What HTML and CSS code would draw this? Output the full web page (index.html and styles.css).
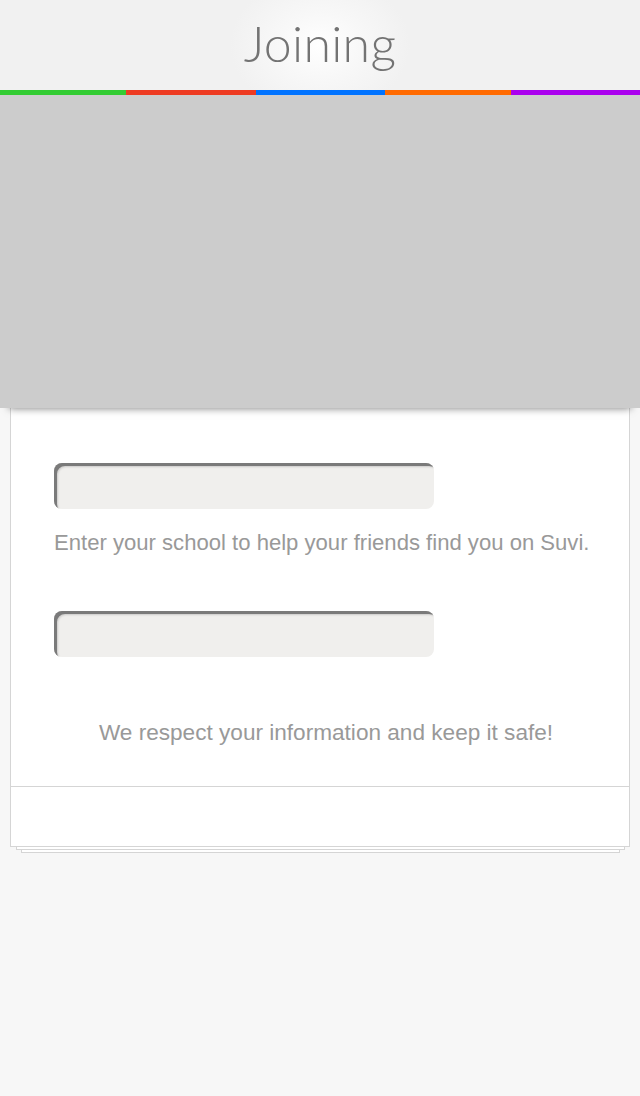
FILE: index.html
```html
<!DOCTYPE html>
<html>
<head>
<meta charset="utf-8">
<link rel="stylesheet" href="styles.css">
</head>
<body>
<header class="header">
  <h1 class="title">Joining</h1>
</header>
<div class="stripes">
  <span class="stripe green"></span>
  <span class="stripe red"></span>
  <span class="stripe blue"></span>
  <span class="stripe orange"></span>
  <span class="stripe purple"></span>
</div>
<div class="banner"></div>
<div class="card-stack">
  <main class="card">
    <section class="card-body">
      <div class="field"></div>
      <p class="hint">Enter your school to help your friends find you on Suvi.</p>
      <div class="field field-second"></div>
      <p class="note">We respect your information and keep it safe!</p>
    </section>
    <footer class="card-footer"></footer>
  </main>
  <div class="sheet sheet-1"></div>
  <div class="sheet sheet-2"></div>
</div>
</body>
</html>
```

FILE: styles.css
```css
html, body {
  margin: 0;
  padding: 0;
}
body {
  background: #f7f7f7;
  font-family: "Liberation Sans", Arial, sans-serif;
  width: 640px;
  min-height: 1096px;
}
.header {
  height: 90px;
  background: radial-gradient(ellipse 90px 70px at 50% 50%, #ffffff 0%, #f8f8f8 45%, #f1f1f1 100%);
  display: flex;
  justify-content: center;
  align-items: flex-start;
}
.title {
  margin: 0;
  padding-top: 13px;
  font-family: Lato, "Open Sans", sans-serif;
  font-weight: 300;
  font-size: 50px;
  line-height: 60px;
  color: #737373;
  letter-spacing: 0.3px;
}
.stripes {
  display: flex;
  height: 5px;
}
.stripe { display: block; height: 5px; }
.green { width: 126px; background: #33cc33; }
.red { width: 130px; background: #ee3b22; }
.blue { width: 129px; background: #0073ff; }
.orange { width: 126px; background: #ff6a00; }
.purple { flex: 1; background: #aa00ee; }
.banner {
  height: 313px;
  background: #cccccc;
  position: relative;
  z-index: 2;
  box-shadow: 0 9px 8px -9px rgba(0,0,0,0.55);
}
.card-stack {
  margin: 0 10px;
  display: flex;
  flex-direction: column;
  align-items: center;
}
.card {
  width: 618px;
  background: #ffffff;
  border: 1px solid #d5d5d5;
  border-top: none;
  position: relative;
  z-index: 1;
}
.card-body {
  padding: 55px 0 40px 43px;
  height: 283px;
  border-bottom: 1px solid #d5d5d5;
}
.field {
  width: 380px;
  height: 46px;
  border-radius: 8px;
  background: #f0efed;
  box-shadow: inset 3px 3px 0 #7a7a7a, inset 4px 4px 2px rgba(0,0,0,0.15);
}
.hint {
  margin: 18px 0 0 0;
  font-size: 22.1px;
  line-height: 32px;
  color: #999999;
  white-space: nowrap;
}
.field-second {
  margin-top: 52px;
}
.note {
  margin: 60px 0 0 -43px;
  text-align: center;
  padding-left: 12px;
  font-size: 22.6px;
  line-height: 32px;
  color: #999999;
  white-space: nowrap;
}
.card-footer {
  height: 59px;
}
.sheet {
  background: #ffffff;
  border: 1px solid #d5d5d5;
  border-top: none;
  height: 2px;
}
.sheet-1 { width: 607px; }
.sheet-2 { width: 597px; }
```
